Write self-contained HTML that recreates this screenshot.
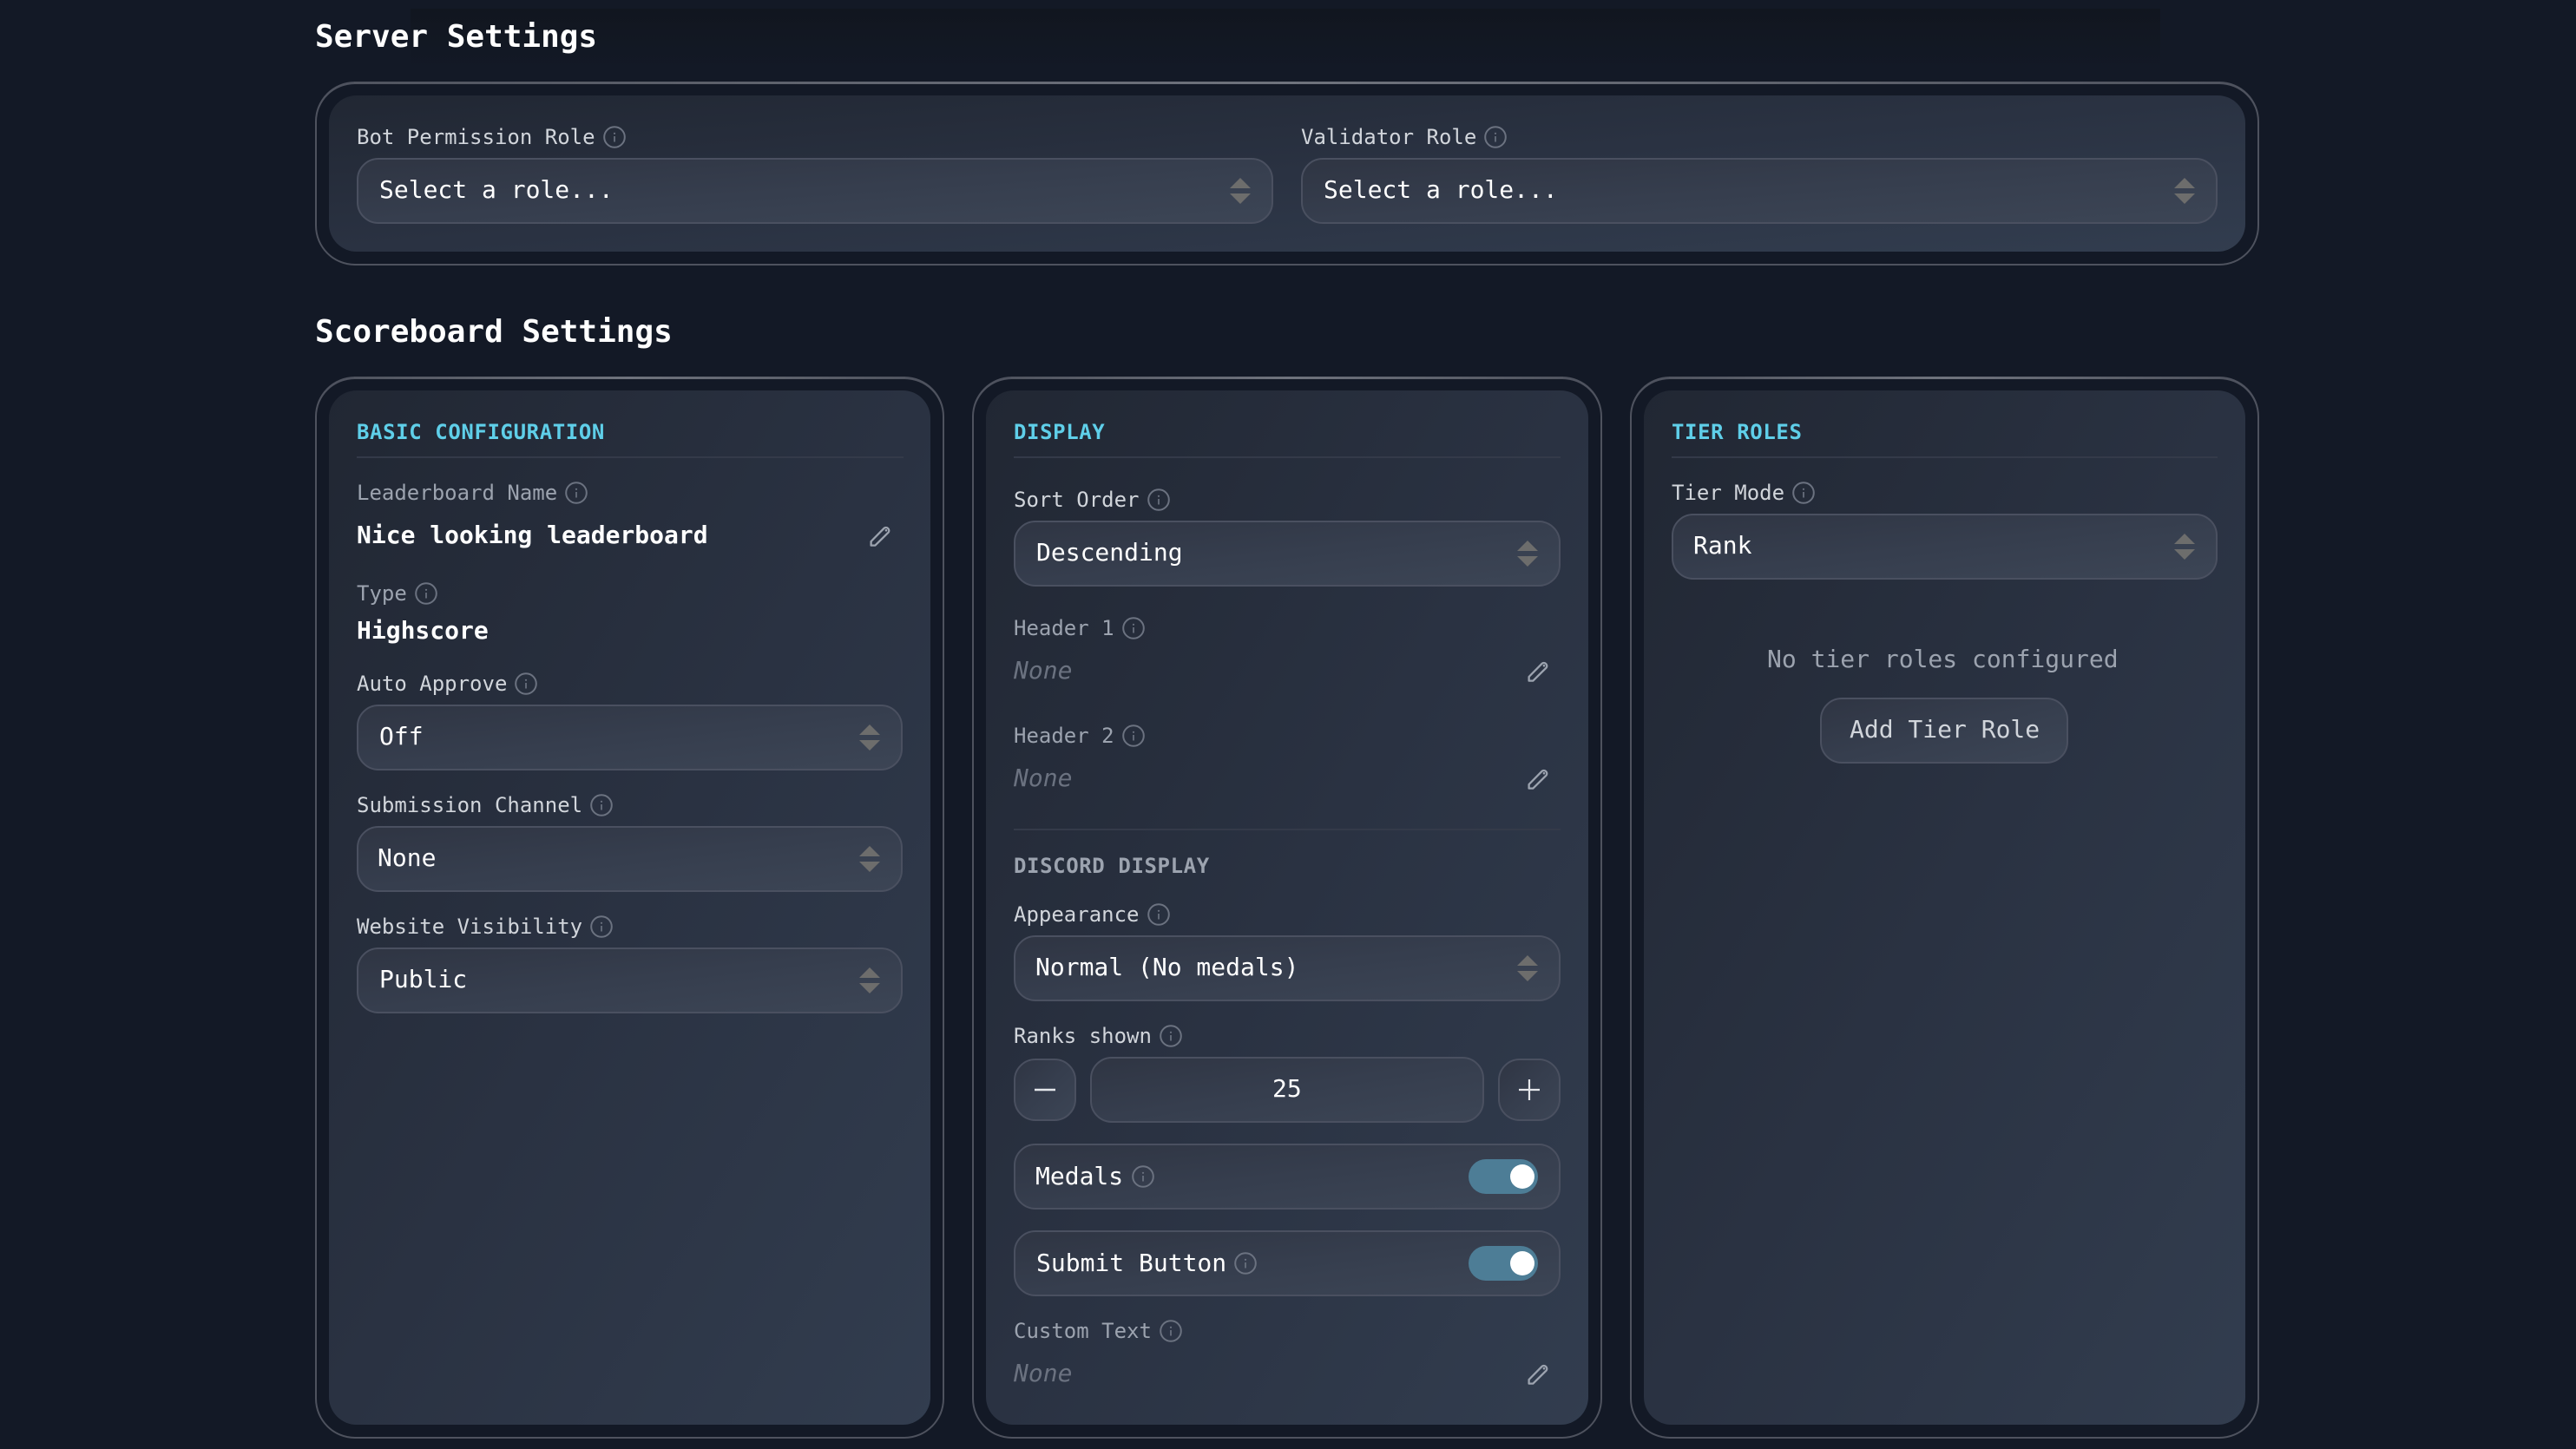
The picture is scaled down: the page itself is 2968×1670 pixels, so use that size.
<!DOCTYPE html>
<html lang="en">
<head>
<meta charset="utf-8">
<title>Settings</title>
<style>
html,body{margin:0;padding:0;width:2968px;height:1670px;overflow:hidden;background:#131926}
body{position:relative;font-family:"DejaVu Sans Mono","Liberation Mono",monospace;color:#fff}
.a{position:absolute;box-sizing:border-box}
.t{position:absolute;white-space:pre;height:40px;line-height:40px}
.h{font-size:36px;font-weight:700;color:#fff;height:50px;line-height:50px;margin-top:2px}
.l{font-size:24px;color:#d1d5db;margin-top:1px}
.g{font-size:24px;color:#9ca3af;margin-top:1px}
.v{font-size:28px;color:#fff}
.b{font-size:28px;font-weight:700;color:#fff}
.n{font-size:28px;font-style:italic;color:#6b7280}
.s{font-size:24px;font-weight:700;color:#5fcfe9;letter-spacing:.6px;margin-top:1px}
.d{font-size:24px;font-weight:700;color:#9ca3af;letter-spacing:.6px;margin-top:1px}
.outer{position:absolute;box-sizing:border-box;border:2.5px solid #4e525e;border-top-width:3px;border-radius:46px;background:#131926}
.top{position:absolute;height:3px;background:linear-gradient(90deg,#50545f 0%,#6f737d 50%,#50545f 100%)}
.inner{position:absolute;border-radius:32px;background:linear-gradient(to bottom right,#212733 0%,#2a3242 50%,#323d4f 100%)}
.sel,.btn{position:absolute;box-sizing:border-box;height:76px;border:2px solid #4a5060;border-radius:25px;background:linear-gradient(to bottom right,#2f3543 0%,#363e4e 50%,#3c4555 100%)}
.btn.sm{height:72px}
.line{position:absolute;height:2px;background:#343a49}
svg{position:absolute;display:block;overflow:visible}
.tog{position:absolute;width:80px;height:40px;border-radius:20px;background:#4d7d96}
.tog i{position:absolute;left:48px;top:6px;width:28px;height:28px;border-radius:50%;background:#fff}
</style>
</head>
<body>
<svg width="0" height="0" style="position:absolute">
  <defs>
    <symbol id="info" viewBox="0 0 26 26">
      <circle cx="13" cy="13" r="11.8" fill="none" stroke="#6b7280" stroke-width="2"/>
      <circle cx="13" cy="8.8" r="1.1" fill="#6b7280"/>
      <path d="M13 12v6.5" stroke="#6b7280" stroke-width="1.7" fill="none"/>
    </symbol>
    <symbol id="pen" viewBox="0 0 24 24">
      <path d="M1.6 18L16.6 2.8a3.5 3.5 0 0 1 5 4.8L6.4 22.6H1.6Z" fill="none" stroke="#9ca3af" stroke-width="2.3" stroke-linejoin="round"/>
      <circle cx="19" cy="5.2" r="1.3" fill="#9ca3af"/>
    </symbol>
    <symbol id="arr" viewBox="0 0 24 30">
      <path d="M12 0L24 12H0Z M0 18H24L12 30Z" fill="#6d6d6c"/>
    </symbol>
  </defs>
</svg>

<div class="a" style="left:473px;top:10px;width:2016px;height:70px;background:linear-gradient(#11161f,rgba(19,25,38,0))"></div>

<!-- Server Settings -->
<div class="t h" style="left:363px;top:16px">Server Settings</div>
<div class="outer" style="left:363px;top:94px;width:2240px;height:212px"></div>
<div class="top" style="left:408px;top:94px;width:2150px"></div>
<div class="inner" style="left:379px;top:110px;width:2208px;height:180px"></div>
<div class="t l" style="left:411px;top:137px">Bot Permission Role</div>
<svg width="26" height="26" style="left:695px;top:145px"><use href="#info"/></svg>
<div class="sel" style="left:411px;top:182px;width:1056px"></div>
<div class="t v" style="left:437px;top:199px">Select a role...</div>
<svg width="24" height="30" style="left:1417px;top:205px"><use href="#arr"/></svg>
<div class="t l" style="left:1499px;top:137px">Validator Role</div>
<svg width="26" height="26" style="left:1710px;top:145px"><use href="#info"/></svg>
<div class="sel" style="left:1499px;top:182px;width:1056px"></div>
<div class="t v" style="left:1525px;top:199px">Select a role...</div>
<svg width="24" height="30" style="left:2505px;top:205px"><use href="#arr"/></svg>

<!-- Scoreboard Settings -->
<div class="t h" style="left:363px;top:356px">Scoreboard Settings</div>

<!-- Column 1 -->
<div class="outer" style="left:363px;top:434px;width:725px;height:1224px"></div>
<div class="top" style="left:408px;top:434px;width:635px"></div>
<div class="inner" style="left:379px;top:450px;width:693px;height:1192px"></div>
<div class="t s" style="left:411px;top:477px">BASIC CONFIGURATION</div>
<div class="line" style="left:411px;top:526px;width:630px"></div>
<div class="t g" style="left:411px;top:547px">Leaderboard Name</div>
<svg width="26" height="26" style="left:651px;top:555px"><use href="#info"/></svg>
<div class="t b" style="left:411px;top:597px">Nice looking leaderboard</div>
<svg width="24" height="24" style="left:1002px;top:606px"><use href="#pen"/></svg>
<div class="t g" style="left:411px;top:663px">Type</div>
<svg width="26" height="26" style="left:478px;top:671px"><use href="#info"/></svg>
<div class="t b" style="left:411px;top:707px">Highscore</div>
<div class="t l" style="left:411px;top:767px">Auto Approve</div>
<svg width="26" height="26" style="left:593px;top:775px"><use href="#info"/></svg>
<div class="sel" style="left:411px;top:812px;width:629px"></div>
<div class="t v" style="left:437px;top:829px">Off</div>
<svg width="24" height="30" style="left:990px;top:835px"><use href="#arr"/></svg>
<div class="t l" style="left:411px;top:907px">Submission Channel</div>
<svg width="26" height="26" style="left:680px;top:915px"><use href="#info"/></svg>
<div class="sel" style="left:411px;top:952px;width:629px"></div>
<div class="t v" style="left:435px;top:969px">None</div>
<svg width="24" height="30" style="left:990px;top:975px"><use href="#arr"/></svg>
<div class="t l" style="left:411px;top:1047px">Website Visibility</div>
<svg width="26" height="26" style="left:680px;top:1055px"><use href="#info"/></svg>
<div class="sel" style="left:411px;top:1092px;width:629px"></div>
<div class="t v" style="left:437px;top:1109px">Public</div>
<svg width="24" height="30" style="left:990px;top:1115px"><use href="#arr"/></svg>

<!-- Column 2 -->
<div class="outer" style="left:1120px;top:434px;width:726px;height:1224px"></div>
<div class="top" style="left:1165px;top:434px;width:636px"></div>
<div class="inner" style="left:1136px;top:450px;width:694px;height:1192px"></div>
<div class="t s" style="left:1168px;top:477px">DISPLAY</div>
<div class="line" style="left:1168px;top:526px;width:630px"></div>
<div class="t l" style="left:1168px;top:555px">Sort Order</div>
<svg width="26" height="26" style="left:1322px;top:563px"><use href="#info"/></svg>
<div class="sel" style="left:1168px;top:600px;width:630px"></div>
<div class="t v" style="left:1194px;top:617px">Descending</div>
<svg width="24" height="30" style="left:1748px;top:623px"><use href="#arr"/></svg>
<div class="t g" style="left:1168px;top:703px">Header 1</div>
<svg width="26" height="26" style="left:1293px;top:711px"><use href="#info"/></svg>
<div class="t n" style="left:1168px;top:753px">None</div>
<svg width="24" height="24" style="left:1760px;top:762px"><use href="#pen"/></svg>
<div class="t g" style="left:1168px;top:827px">Header 2</div>
<svg width="26" height="26" style="left:1293px;top:835px"><use href="#info"/></svg>
<div class="t n" style="left:1168px;top:877px">None</div>
<svg width="24" height="24" style="left:1760px;top:886px"><use href="#pen"/></svg>
<div class="line" style="left:1168px;top:955px;width:630px"></div>
<div class="t d" style="left:1168px;top:977px">DISCORD DISPLAY</div>
<div class="t l" style="left:1168px;top:1033px">Appearance</div>
<svg width="26" height="26" style="left:1322px;top:1041px"><use href="#info"/></svg>
<div class="sel" style="left:1168px;top:1078px;width:630px"></div>
<div class="t v" style="left:1193px;top:1095px">Normal (No medals)</div>
<svg width="24" height="30" style="left:1748px;top:1101px"><use href="#arr"/></svg>
<div class="t l" style="left:1168px;top:1173px">Ranks shown</div>
<svg width="26" height="26" style="left:1336px;top:1181px"><use href="#info"/></svg>
<div class="btn sm" style="left:1168px;top:1220px;width:72px"></div>
<svg width="24" height="24" style="left:1192px;top:1244px"><path d="M0 12H24" stroke="#e5e7eb" stroke-width="2.5" fill="none"/></svg>
<div class="sel" style="left:1256px;top:1218px;width:454px"></div>
<div class="t v" style="left:1466px;top:1235px">25</div>
<div class="btn sm" style="left:1726px;top:1220px;width:72px"></div>
<svg width="24" height="24" style="left:1750px;top:1244px"><path d="M0 12H24M12 0V24" stroke="#e5e7eb" stroke-width="2.2" fill="none"/></svg>
<div class="sel" style="left:1168px;top:1318px;width:630px"></div>
<div class="t v" style="left:1193px;top:1336px">Medals</div>
<svg width="26" height="26" style="left:1304px;top:1343px"><use href="#info"/></svg>
<div class="tog" style="left:1692px;top:1336px"><i></i></div>
<div class="sel" style="left:1168px;top:1418px;width:630px"></div>
<div class="t v" style="left:1194px;top:1436px">Submit Button</div>
<svg width="26" height="26" style="left:1422px;top:1443px"><use href="#info"/></svg>
<div class="tog" style="left:1692px;top:1436px"><i></i></div>
<div class="t g" style="left:1168px;top:1513px">Custom Text</div>
<svg width="26" height="26" style="left:1336px;top:1521px"><use href="#info"/></svg>
<div class="t n" style="left:1168px;top:1563px">None</div>
<svg width="24" height="24" style="left:1760px;top:1572px"><use href="#pen"/></svg>

<!-- Column 3 -->
<div class="outer" style="left:1878px;top:434px;width:725px;height:1224px"></div>
<div class="top" style="left:1923px;top:434px;width:635px"></div>
<div class="inner" style="left:1894px;top:450px;width:693px;height:1192px"></div>
<div class="t s" style="left:1926px;top:477px">TIER ROLES</div>
<div class="line" style="left:1926px;top:526px;width:629px"></div>
<div class="t l" style="left:1926px;top:547px">Tier Mode</div>
<svg width="26" height="26" style="left:2065px;top:555px"><use href="#info"/></svg>
<div class="sel" style="left:1926px;top:592px;width:629px"></div>
<div class="t v" style="left:1951px;top:609px">Rank</div>
<svg width="24" height="30" style="left:2505px;top:615px"><use href="#arr"/></svg>
<div class="t" style="left:2036px;top:740px;font-size:28px;color:#9ca3af">No tier roles configured</div>
<div class="sel" style="left:2097px;top:804px;width:286px"></div>
<div class="t" style="left:2131px;top:821px;font-size:28px;color:#d1d5db">Add Tier Role</div>
</body>
</html>
